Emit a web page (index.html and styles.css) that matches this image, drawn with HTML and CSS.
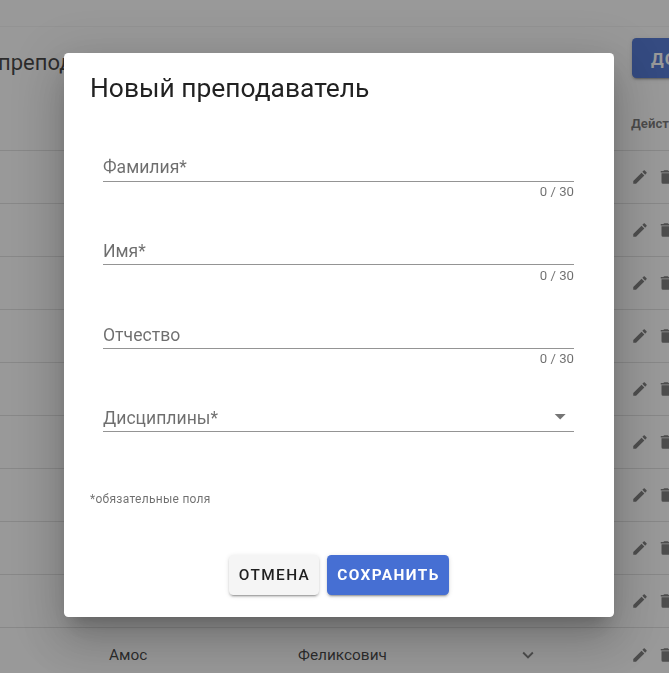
FILE: index.html
```
<!DOCTYPE html>
<html lang="ru">
<head>
<meta charset="utf-8">
<title>Преподаватели</title>
<link rel="stylesheet" href="styles.css">
</head>
<body>
<svg class="defs" aria-hidden="true">
  <symbol id="pencil" viewBox="0 0 24 24"><path d="M20.71,7.04C21.1,6.65 21.1,6 20.71,5.63L18.37,3.29C18,2.9 17.35,2.9 16.96,3.29L15.12,5.12L18.87,8.87M3,17.25V21H6.75L17.81,9.93L14.06,6.18L3,17.25Z"/></symbol>
  <symbol id="trash" viewBox="0 0 24 24"><path d="M19,4H15.5L14.5,3H9.5L8.5,4H5V6H19M6,19A2,2 0 0,0 8,21H16A2,2 0 0,0 18,19V7H6V19Z"/></symbol>
  <symbol id="chevron" viewBox="0 0 24 24"><path d="M7.41,8.58L12,13.17L16.59,8.58L18,10L12,16L6,10L7.41,8.58Z"/></symbol>
</svg>
<div class="page">
  <header class="bar"></header>
  <div class="heading"><h2 class="heading-text">преподаватели</h2><button class="btn btn-primary btn-add">ДОБАВИТЬ</button></div>
  <div class="thead"><span class="th-actions">Действия</span></div>
  <div class="row"><svg class="icon pen"><use href="#pencil"/></svg><svg class="icon"><use href="#trash"/></svg></div>
  <div class="row"><svg class="icon pen"><use href="#pencil"/></svg><svg class="icon"><use href="#trash"/></svg></div>
  <div class="row"><svg class="icon pen"><use href="#pencil"/></svg><svg class="icon"><use href="#trash"/></svg></div>
  <div class="row"><svg class="icon pen"><use href="#pencil"/></svg><svg class="icon"><use href="#trash"/></svg></div>
  <div class="row"><svg class="icon pen"><use href="#pencil"/></svg><svg class="icon"><use href="#trash"/></svg></div>
  <div class="row"><svg class="icon pen"><use href="#pencil"/></svg><svg class="icon"><use href="#trash"/></svg></div>
  <div class="row"><svg class="icon pen"><use href="#pencil"/></svg><svg class="icon"><use href="#trash"/></svg></div>
  <div class="row"><svg class="icon pen"><use href="#pencil"/></svg><svg class="icon"><use href="#trash"/></svg></div>
  <div class="row"><svg class="icon pen"><use href="#pencil"/></svg><svg class="icon"><use href="#trash"/></svg></div>
  <div class="row row-last"><span class="name">Амос</span><span class="patronymic">Феликсович</span><svg class="icon chevron"><use href="#chevron"/></svg><svg class="icon pen"><use href="#pencil"/></svg><svg class="icon"><use href="#trash"/></svg></div>
</div>
<div class="overlay">
  <div class="dialog">
    <h1 class="title">Новый преподаватель</h1>
    <form class="fields">
      <div class="field"><div class="line"><label>Фамилия*</label></div><div class="counter">0 / 30</div></div>
      <div class="field"><div class="line"><label>Имя*</label></div><div class="counter">0 / 30</div></div>
      <div class="field"><div class="line"><label>Отчество</label></div><div class="counter">0 / 30</div></div>
      <div class="field"><div class="line"><label>Дисциплины*</label><svg class="caret" viewBox="0 0 24 24"><path d="M7,10L12,15L17,10H7Z"/></svg></div></div>
    </form>
    <small class="note">*обязательные поля</small>
    <div class="actions"><button class="btn btn-cancel">ОТМЕНА</button><button class="btn btn-primary btn-save">СОХРАНИТЬ</button></div>
  </div>
</div>
</body>
</html>
```
FILE: styles.css
```
* { box-sizing: border-box; }
html, body { margin: 0; height: 100%; overflow: hidden; }
body { font-family: Roboto, sans-serif; color: rgba(0,0,0,.87); background: #fff; }
.defs { display: none; }
.page { width: 669px; height: 673px; overflow: hidden; }
.bar { height: 27px; background: #fff; border-bottom: 1px solid #f4f4f4; }
.heading { height: 75px; display: flex; align-items: flex-start; justify-content: space-between; }
.heading-text { margin: 22px 0 0 -2px; font-size: 22px; font-weight: 400; line-height: 28px; color: rgba(0,0,0,.8); }
.btn { border: 0; border-radius: 4.4px; height: 40px; padding: 0 0 0 2px; font: 500 15.4px Roboto, sans-serif; letter-spacing: 1.4px; flex: none; white-space: nowrap;
  box-shadow: 0 3px 1px -2px rgba(0,0,0,.2), 0 2px 2px 0 rgba(0,0,0,.14), 0 1px 5px 0 rgba(0,0,0,.12); }
.btn-primary { background: #466fd3; color: #fff; font-weight: 700; }
.btn-add { width: 140px; margin: 11px -103px 0 0; padding: 2px 0 0 19px; text-align: left; font-size: 17px; }
.thead { height: 49px; display: flex; align-items: center; padding-left: 631px; border-bottom: 1px solid rgba(0,0,0,.12); }
.th-actions { font-size: 13.2px; font-weight: 700; color: rgba(0,0,0,.56); margin-top: -5px; }
.row { height: 53px; display: grid; grid-template-columns: 109px 189px 219px 113.6px 26.8px 40px; align-items: center; border-bottom: 1px solid rgba(0,0,0,.12); font-size: 15.4px; }
.icon { width: 18px; height: 18px; fill: rgba(0,0,0,.54); }
.pen { grid-column: 5; }
.name { grid-column: 2; }
.row-last { padding-top: 2px; color: rgba(0,0,0,.8); }
.chevron { width: 22px; height: 22px; }
.overlay { position: fixed; inset: 0; background: rgba(33,33,33,.46); display: flex; align-items: flex-start; }
.dialog { width: 550px; height: 564px; margin: 53px 0 0 64px; background: #fff; border-radius: 4.4px; padding: 18px 40px 0 39px;
  box-shadow: 0 12px 16px -8px rgba(0,0,0,.2), 0 26px 42px 3px rgba(0,0,0,.14), 0 10px 50px 9px rgba(0,0,0,.12); }
.title { margin: 0 0 0 -13px; font-size: 26.4px; font-weight: 400; line-height: 34px; letter-spacing: 0; }
.fields { display: block; padding-top: 48.3px; }
.field { height: 83.4px; }
.line { height: 28.8px; display: flex; justify-content: space-between; border-bottom: 1px solid #949494; }
.line label { font-size: 17.6px; line-height: 28.4px; color: rgba(0,0,0,.57); }
.field:nth-child(n+3) label { line-height: 30px; }
.counter { text-align: right; font-size: 13.2px; line-height: 13px; margin-top: 3.3px; color: rgba(0,0,0,.57); }
.caret { width: 26.4px; height: 26.4px; margin: 0 .5px 0 0; flex: none; fill: rgba(0,0,0,.54); }
.note { display: block; margin: 3.1px 0 0 -13px; font-size: 12px; line-height: 18px; color: rgba(0,0,0,.57); letter-spacing: .28px; }
.actions { display: flex; gap: 8px; justify-content: center; padding-top: 47px; }
.btn-cancel { width: 90px; background: #f5f5f5; color: rgba(0,0,0,.87); }
.btn-save { width: 122px; }
```
